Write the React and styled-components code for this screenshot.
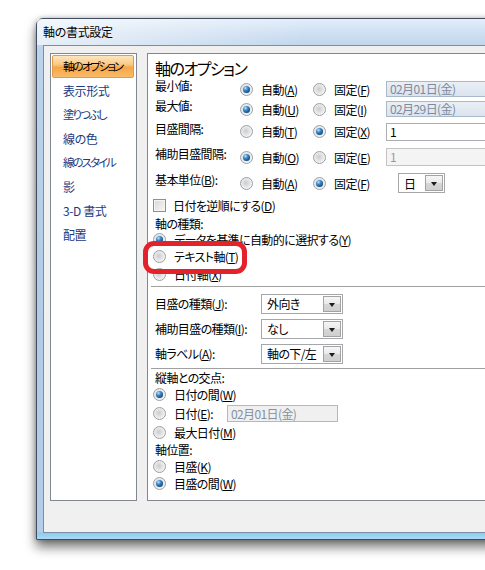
import React from "react";
import styled, { createGlobalStyle } from "styled-components";

const GlobalStyle = createGlobalStyle`
  html, body {
    margin: 0;
    padding: 0;
    background: #fff;
    overflow: hidden;
  }
  body {
    font-family: "Noto Sans CJK JP", "Noto Sans", sans-serif;
    font-size: 12px;
    letter-spacing: -0.6px;
    color: #000;
    font-feature-settings: "palt" 1;
  }
  u {
    text-decoration: underline;
    text-underline-offset: 1px;
  }
`;

const topRows = [
  { label: "最小値:", auto: "A", fixed: "F", autoOn: true, kind: "date", value: "02月01日(金)", h: 20 },
  { label: "最大値:", auto: "U", fixed: "I", autoOn: true, kind: "date", value: "02月29日(金)", h: 20 },
  { label: "目盛間隔:", auto: "T", fixed: "X", autoOn: false, kind: "text", value: "1", h: 25 },
  { label: "補助目盛間隔:", auto: "O", fixed: "E", autoOn: true, kind: "off", value: "1", h: 26 },
  { label: <>基本単位(<u>B</u>):</>, auto: "A", fixed: "F", autoOn: false, kind: "select", value: "日", h: 26 },
];

// kana-heavy labels are set tighter, like the narrow kana of Meiryo UI
const navItems = [
  { text: "軸のオプション", tight: true },
  { text: "表示形式" },
  { text: "塗りつぶし", tight: true },
  { text: "線の色" },
  { text: "線のスタイル", tight: true },
  { text: "影" },
  { text: "3-D 書式" },
  { text: "配置" },
];

export default function App() {
  return (
    <Stage>
      <GlobalStyle />
      <Window>
        <TitleBar>軸の書式設定</TitleBar>
        <Client>
          <NavPane>
            {navItems.map((item, i) => (
              <NavItem key={item.text} $active={i === 0} $tight={item.tight}>
                {item.text}
              </NavItem>
            ))}
          </NavPane>

          <OptionsPane>
            <PaneTitle>軸のオプション</PaneTitle>

            {topRows.map((row, i) => (
              <OptionRow key={i} $h={row.h}>
                <RowLabel>{row.label}</RowLabel>
                <Radio on={row.autoOn}>
                  自動(<u>{row.auto}</u>)
                </Radio>
                <Radio on={!row.autoOn}>
                  固定(<u>{row.fixed}</u>)
                </Radio>
                {row.kind === "select" ? (
                  <Select $w={47} $offset={12}>
                    <SelectText>{row.value}</SelectText>
                    <DropButton />
                  </Select>
                ) : (
                  <TextBox $tone={row.kind} $h={row.kind === "date" ? 16 : 18}>
                    {row.value}
                  </TextBox>
                )}
              </OptionRow>
            ))}

            <Line $h={19}>
              <CheckBox />
              <span>
                日付を逆順にする(<u>D</u>)
              </span>
            </Line>
            <Line $h={16}>
              <SubLabel>軸の種類:</SubLabel>
            </Line>
            <Line $h={16}>
              <Radio on>
                データを基準に自動的に選択する(<u>Y</u>)
              </Radio>
            </Line>
            <Line $h={18}>
              <Radio>
                テキスト軸(<u>T</u>)
              </Radio>
            </Line>
            <Line $h={18}>
              <Radio>
                日付軸(<u>X</u>)
              </Radio>
            </Line>

            <Separator />

            <SelectRow>
              <RowLabel>
                目盛の種類(<u>J</u>):
              </RowLabel>
              <Select $w={82}>
                <SelectText>外向き</SelectText>
                <DropButton />
              </Select>
            </SelectRow>
            <SelectRow>
              <RowLabel>
                補助目盛の種類(<u>I</u>):
              </RowLabel>
              <Select $w={82}>
                <SelectText>なし</SelectText>
                <DropButton />
              </Select>
            </SelectRow>
            <SelectRow>
              <RowLabel>
                軸ラベル(<u>A</u>):
              </RowLabel>
              <Select $w={82}>
                <SelectText>軸の下/左</SelectText>
                <DropButton />
              </Select>
            </SelectRow>

            <Separator $gap={2} />

            <Line $h={16}>
              <SubLabel>縦軸との交点:</SubLabel>
            </Line>
            <Line $h={18}>
              <Radio on>
                日付の間(<u>W</u>)
              </Radio>
            </Line>
            <Line $h={20}>
              <Radio>
                日付(<u>E</u>):
              </Radio>
              <TextBox $tone="dateOff" $h={17} $w={111} $offset={14}>
                02月01日(金)
              </TextBox>
            </Line>
            <Line $h={18}>
              <Radio>
                最大日付(<u>M</u>)
              </Radio>
            </Line>
            <Line $h={17}>
              <SubLabel>軸位置:</SubLabel>
            </Line>
            <Line $h={16}>
              <Radio>
                目盛(<u>K</u>)
              </Radio>
            </Line>
            <Line $h={18}>
              <Radio on>
                目盛の間(<u>W</u>)
              </Radio>
            </Line>

            <Highlight />
          </OptionsPane>
        </Client>
      </Window>
    </Stage>
  );
}

function Radio({ on, children }) {
  return (
    <RadioWrap>
      <RadioDot $on={on} />
      <span>{children}</span>
    </RadioWrap>
  );
}

const Stage = styled.div`
  width: 485px;
  height: 570px;
  box-sizing: border-box;
  padding: 18px 0 0 36px;
  overflow: hidden;
`;

const Window = styled.div`
  width: 480px;
  border: 1px solid #3f4d5e;
  border-radius: 7px 7px 0 0;
  padding: 0 6px 6px 6px;
  background: linear-gradient(
    180deg,
    #e4eef9 0px,
    #cfe0f2 14px,
    #bcd3eb 30px,
    #b2cbe6 60%,
    #b4cde8 calc(100% - 7px),
    #8ccbee calc(100% - 6px),
    #a9dcf5 100%
  );
  box-shadow: 0 7px 12px rgba(0, 0, 0, 0.55), 0 0 5px rgba(0, 0, 0, 0.25);
`;

const TitleBar = styled.div`
  height: 26px;
  line-height: 26px;
  margin: 0 -6px;
  padding: 0 6px;
  color: #000;
  font-size: 12px;
  letter-spacing: -0.3px;
  background: linear-gradient(90deg, rgba(255, 255, 255, 0.6), rgba(255, 255, 255, 0) 55%);
`;

const Client = styled.div`
  display: flex;
  gap: 10px;
  height: 488px;
  box-sizing: border-box;
  padding: 7px 0 31px 6px;
  background: #f0f0f0;
  border: 1px solid #7d8ea4;
`;

const NavPane = styled.div`
  width: 87px;
  box-sizing: border-box;
  background: #fff;
  border: 1px solid #828790;
  padding: 1px 2px 1px 1px;
`;

const NavItem = styled.div`
  height: 23px;
  line-height: 21px;
  margin-bottom: 1px;
  box-sizing: border-box;
  padding-left: 10px;
  border: 1px solid ${(p) => (p.$active ? "#e19a45" : "transparent")};
  border-radius: 2px;
  color: ${(p) => (p.$active ? "#000" : "#1b3a7e")};
  font-size: ${(p) => (p.$tight ? "11.5px" : "12px")};
  letter-spacing: ${(p) => (p.$tight ? "-2px" : "-0.4px")};
  white-space: nowrap;
  overflow: hidden;
  background: ${(p) =>
    p.$active
      ? "linear-gradient(180deg, #fde6c0 0%, #fbc983 40%, #f7a646 55%, #f9bb6a 100%)"
      : "transparent"};
`;

const OptionsPane = styled.div`
  position: relative;
  flex: 1;
  box-sizing: border-box;
  background: #fff;
  border: 1px solid #828790;
  padding: 4px 0 0 5px;
`;

const PaneTitle = styled.div`
  height: 21px;
  line-height: 21px;
  padding-left: 2px;
  font-size: 16px;
  letter-spacing: -1.5px;
`;

const OptionRow = styled.div`
  display: grid;
  grid-template-columns: 87px 73px 73px auto;
  align-items: center;
  height: ${(p) => p.$h}px;
  white-space: nowrap;

  & > ${() => RowLabel} {
    align-self: start;
    line-height: ${(p) => p.$h - 6}px;
  }
`;

const RowLabel = styled.div`
  padding-left: 2px;
  white-space: nowrap;
`;

const SubLabel = styled.div`
  padding-left: 2px;
`;

const RadioWrap = styled.div`
  display: flex;
  align-items: center;
  gap: 8px;
  white-space: nowrap;
`;

const RadioDot = styled.span`
  position: relative;
  width: 13px;
  height: 13px;
  flex: none;
  box-sizing: border-box;
  border-radius: 50%;
  border: 1px solid #9c9fa3;
  background: radial-gradient(circle at 45% 45%, #c9cbcd 0, #dfe0e1 35%, #f6f6f6 75%);

  &::after {
    content: "";
    display: ${(p) => (p.$on ? "block" : "none")};
    position: absolute;
    left: 2px;
    top: 2px;
    width: 7px;
    height: 7px;
    border-radius: 50%;
    background: radial-gradient(circle at 35% 30%, #bfe4ff 0, #3a87c8 35%, #124a82 75%, #0b335c 100%);
  }
`;

const CheckBox = styled.span`
  width: 13px;
  height: 13px;
  box-sizing: border-box;
  border: 1px solid #8e8f8f;
  background: linear-gradient(135deg, #d6d7d8, #f7f7f7);
  box-shadow: inset 0 0 0 1px #f4f4f4;
  margin-right: 7px;
`;

const Line = styled.div`
  display: flex;
  align-items: center;
  height: ${(p) => p.$h}px;
  white-space: nowrap;
`;

const tones = {
  date: { bg: "linear-gradient(180deg, #e9eff6, #dbe4ee)", border: "#a9b9cc", color: "#7e8a9c" },
  dateOff: { bg: "#f0f0f0", border: "#a7bad2", color: "#8590a0" },
  text: { bg: "#fff", border: "#abadb3", color: "#000" },
  off: { bg: "#f4f4f4", border: "#c3c3c3", color: "#9a9a9a" },
};

const TextBox = styled.div`
  width: ${(p) => p.$w || 110}px;
  height: ${(p) => p.$h}px;
  box-sizing: border-box;
  margin-left: ${(p) => p.$offset || 0}px;
  padding-left: 3px;
  line-height: ${(p) => p.$h - 2}px;
  border: 1px solid ${(p) => tones[p.$tone].border};
  background: ${(p) => tones[p.$tone].bg};
  color: ${(p) => tones[p.$tone].color};
  white-space: nowrap;
`;

const SelectRow = styled.div`
  display: grid;
  grid-template-columns: 108px auto;
  align-items: center;
  height: 25px;
  white-space: nowrap;
`;

const Select = styled.div`
  display: flex;
  align-items: center;
  justify-content: space-between;
  width: ${(p) => p.$w}px;
  height: 20px;
  box-sizing: border-box;
  margin-left: ${(p) => p.$offset || 0}px;
  border: 1px solid #a5a7ab;
  background: #fff;
  padding: 1px;
`;

const SelectText = styled.span`
  padding-left: 4px;
  white-space: nowrap;
`;

const DropButton = styled.span`
  position: relative;
  width: 18px;
  height: 16px;
  box-sizing: border-box;
  border: 1px solid #a3a3a3;
  background: linear-gradient(180deg, #f6f6f6 0%, #e9e9e9 50%, #d6d6d6 51%, #cfcfcf 100%);

  &::after {
    content: "";
    position: absolute;
    left: 5px;
    top: 6px;
    border-left: 3.5px solid transparent;
    border-right: 3.5px solid transparent;
    border-top: 4px solid #1c1c1c;
  }
`;

const Separator = styled.div`
  height: 0;
  border-top: 1px solid #a0a0a0;
  margin: ${(p) => (p.$gap ? `${p.$gap}px 0 0 -2px` : "3px 0 4px -2px")};
`;

const Highlight = styled.div`
  position: absolute;
  left: -5px;
  top: 187px;
  width: 104px;
  height: 33px;
  box-sizing: border-box;
  border: 5px solid #e2232c;
  border-radius: 11px;
  pointer-events: none;
`;
